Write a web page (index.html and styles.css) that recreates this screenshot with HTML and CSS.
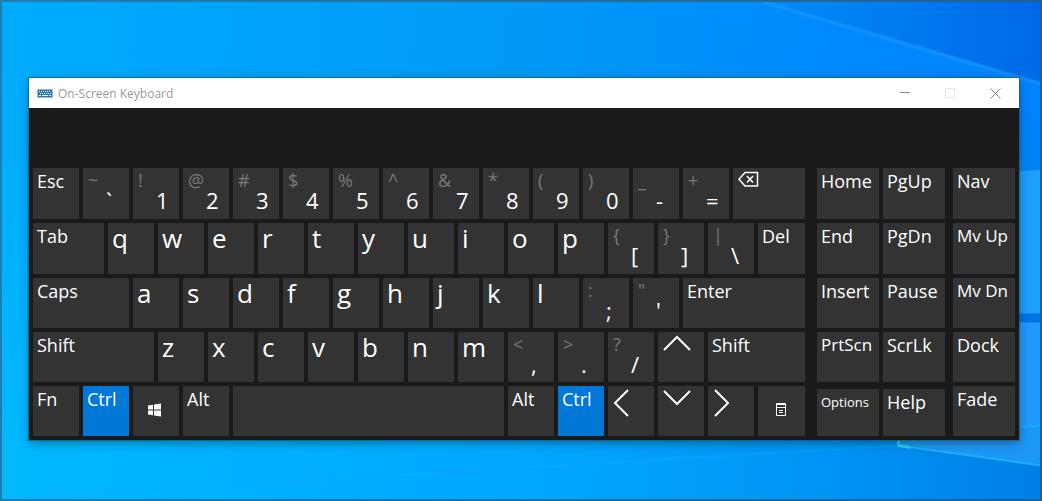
FILE: index.html
```html
<!DOCTYPE html>
<html lang="en">
<head>
    <meta charset="UTF-8">
    <meta name="viewport" content="width=device-width, initial-scale=1.0">
    <title>On-Screen Keyboard</title>
    <link rel="stylesheet" href="styles.css">
</head>
<body>
    <!-- Desktop wallpaper -->
    <svg class="wallpaper" viewBox="0 0 1042 501" preserveAspectRatio="none" aria-hidden="true">
        <defs>
            <linearGradient id="sky" x1="0" y1="0" x2="1" y2="0">
                <stop offset="0" stop-color="#00abfd"/>
                <stop offset="0.5" stop-color="#009af6"/>
                <stop offset="0.8" stop-color="#0089fc"/>
                <stop offset="1" stop-color="#0084ff"/>
            </linearGradient>
            <linearGradient id="corner" x1="0" y1="0" x2="1" y2="0">
                <stop offset="0" stop-color="#008cf6"/>
                <stop offset="0.5" stop-color="#007bf0"/>
                <stop offset="1" stop-color="#0068e6"/>
            </linearGradient>
            <linearGradient id="floor" x1="0" y1="0" x2="1" y2="0">
                <stop offset="0" stop-color="#00b9ff"/>
                <stop offset="0.5" stop-color="#00a8ff"/>
                <stop offset="0.8" stop-color="#0094f4"/>
                <stop offset="1" stop-color="#007fe6"/>
            </linearGradient>
            <linearGradient id="fade" x1="0" y1="0" x2="0" y2="1">
                <stop offset="0.1" stop-color="#fff" stop-opacity="0"/>
                <stop offset="0.9" stop-color="#fff"/>
            </linearGradient>
            <mask id="lower">
                <rect width="1042" height="501" fill="url(#fade)"/>
            </mask>
        </defs>
        <rect width="1042" height="501" fill="url(#sky)"/>
        <path d="M764 0H1042V82Z" fill="url(#corner)"/>
        <path d="M764 0L1042 82" stroke="#1b98ff" stroke-width="5" stroke-opacity="0.35"/>
        <path d="M764 0L1042 82" stroke="#1b98ff" stroke-width="2" stroke-opacity="0.6"/>
        <rect width="1042" height="501" fill="url(#floor)" mask="url(#lower)"/>
        <path d="M900 180L1042 169V314H900Z" fill="#1ea0fd"/>
        <path d="M900 314H1042V323H900Z" fill="#0074e6"/>
        <path d="M900 323H1042V427L900 447Z" fill="#2299fd"/>
        <path d="M900 441L1042 427V467L900 447Z" fill="#1c97f5"/>
        <path d="M900 441L1042 427" stroke="#16aefc" stroke-width="2"/>
        <path d="M0 501L900 447" stroke="#16aaff" stroke-width="3" stroke-opacity="0.3"/>
        <path d="M900 447L1042 467" stroke="#1fb0fa" stroke-width="2"/>
        <path d="M900 438V447L912 449" fill="none" stroke="#2fdcf0" stroke-width="3" stroke-opacity="0.8"/>
    </svg>

    <main class="window">
        <!-- Title bar -->
        <header class="titlebar">
            <svg class="app-icon" width="16" height="9" viewBox="0 0 16 9" aria-hidden="true">
                <rect x="0.5" y="0.5" width="15" height="8" fill="#1878d0" stroke="#b5b5b5"/>
                <path d="M2 2.5h12M3 4.5h11" stroke="#fff" stroke-dasharray="1 1"/>
                <path d="M2 6.5h2M5 6.5h6M12 6.5h2" stroke="#fff"/>
            </svg>
            <h1>On-Screen Keyboard</h1>
            <div class="controls">
                <button aria-label="Minimize"><svg width="11" height="11"><path d="M0 4.5h10"/></svg></button>
                <button aria-label="Maximize" disabled><svg width="11" height="11"><path d="M0.5 0.5h9v9h-9z"/></svg></button>
                <button aria-label="Close"><svg width="11" height="11"><path d="M0.5 0.5l10 10M10.5 0.5l-10 10"/></svg></button>
            </div>
        </header>

        <div class="keyboard">
            <!-- Main keys -->
            <div class="block main-keys">
                <button class="key">Esc</button>
                <button class="key dual"><span>~</span>`</button>
                <button class="key dual"><span>!</span>1</button>
                <button class="key dual"><span>@</span>2</button>
                <button class="key dual"><span>#</span>3</button>
                <button class="key dual"><span>$</span>4</button>
                <button class="key dual"><span>%</span>5</button>
                <button class="key dual"><span>^</span>6</button>
                <button class="key dual"><span>&amp;</span>7</button>
                <button class="key dual"><span>*</span>8</button>
                <button class="key dual"><span>(</span>9</button>
                <button class="key dual"><span>)</span>0</button>
                <button class="key dual"><span>_</span>-</button>
                <button class="key dual"><span>+</span>=</button>
                <button class="key icon w3" aria-label="Backspace">
                    <svg class="medium-line" width="36" height="36"><path d="M12 4.5H24.5V18H12L6 11.2ZM14 8l6 6.5M20 8l-6 6.5"/></svg>
                </button>

                <button class="key w3">Tab</button>
                <button class="key letter">q</button>
                <button class="key letter">w</button>
                <button class="key letter">e</button>
                <button class="key letter">r</button>
                <button class="key letter">t</button>
                <button class="key letter">y</button>
                <button class="key letter">u</button>
                <button class="key letter">i</button>
                <button class="key letter">o</button>
                <button class="key letter">p</button>
                <button class="key dual"><span>{</span>[</button>
                <button class="key dual"><span>}</span>]</button>
                <button class="key dual"><span>|</span>\</button>
                <button class="key">Del</button>

                <button class="key w4">Caps</button>
                <button class="key letter">a</button>
                <button class="key letter">s</button>
                <button class="key letter">d</button>
                <button class="key letter">f</button>
                <button class="key letter">g</button>
                <button class="key letter">h</button>
                <button class="key letter">j</button>
                <button class="key letter">k</button>
                <button class="key letter">l</button>
                <button class="key dual"><span>:</span>;</button>
                <button class="key dual"><span>"</span>'</button>
                <button class="key w5">Enter</button>

                <button class="key w5">Shift</button>
                <button class="key letter">z</button>
                <button class="key letter">x</button>
                <button class="key letter">c</button>
                <button class="key letter">v</button>
                <button class="key letter">b</button>
                <button class="key letter">n</button>
                <button class="key letter">m</button>
                <button class="key dual"><span>&lt;</span>,</button>
                <button class="key dual"><span>&gt;</span>.</button>
                <button class="key dual"><span>?</span>/</button>
                <button class="key icon" aria-label="Up">
                    <svg width="36" height="36"><path d="M6 18L19 5L32 18"/></svg>
                </button>
                <button class="key w4">Shift</button>

                <button class="key">Fn</button>
                <button class="key active">Ctrl</button>
                <button class="key icon center" aria-label="Windows">
                    <svg class="solid" width="16" height="16"><path d="M0 2.5L5 1.7V6.5H0ZM6 1.6L13 0.5V6.5H6ZM0 7.5H5V12.3L0 11.5ZM6 7.5H13V13.5L6 12.4Z"/></svg>
                </button>
                <button class="key">Alt</button>
                <button class="key w11" aria-label="Space"></button>
                <button class="key">Alt</button>
                <button class="key active">Ctrl</button>
                <button class="key icon" aria-label="Left">
                    <svg width="36" height="36"><path d="M20 4L7 17L20 30"/></svg>
                </button>
                <button class="key icon" aria-label="Down">
                    <svg width="36" height="36"><path d="M6 5L19 18L32 5"/></svg>
                </button>
                <button class="key icon" aria-label="Right">
                    <svg width="36" height="36"><path d="M7 4L20 17L7 30"/></svg>
                </button>
                <button class="key icon center" aria-label="Menu">
                    <svg class="thin" width="11" height="16"><path d="M0.5 0.5h9v12h-9zM0 1.5h10M0 4.5h10M3 7.5h4M3 9.5h4"/></svg>
                </button>
            </div>

            <!-- Navigation keys -->
            <div class="block nav-keys">
                <button class="key">Home</button>
                <button class="key">PgUp</button>
                <button class="key">End</button>
                <button class="key">PgDn</button>
                <button class="key">Insert</button>
                <button class="key">Pause</button>
                <button class="key medium">PrtScn</button>
                <button class="key">ScrLk</button>
                <button class="key small short">Options</button>
                <button class="key short">Help</button>
            </div>

            <!-- Window keys -->
            <div class="block side-keys">
                <button class="key">Nav</button>
                <button class="key medium">Mv Up</button>
                <button class="key medium">Mv Dn</button>
                <button class="key">Dock</button>
                <button class="key">Fade</button>
            </div>
        </div>
    </main>
</body>
</html>
```
FILE: styles.css
```css
* {
    margin: 0;
    padding: 0;
    box-sizing: border-box;
}
html {
    background: linear-gradient(to right, #1b80b0, #1f6096);
}
body {
    min-height: 100vh;
    padding: 76px 21px 59px 27px;
    border: 2px solid transparent;
    position: relative;
    overflow: hidden;
    font-family: "Segoe UI", "Open Sans", sans-serif;
}
.wallpaper {
    position: absolute;
    top: 0;
    left: 0;
    width: 100%;
    height: 100%;
    z-index: -1;
}
.window {
    background-color: #1a1a1a;
    box-shadow: 0 0 0 1px rgba(40, 80, 110, 0.6), 0 3px 10px rgba(0, 0, 0, 0.35);
}
/* ===== Title bar ===== */
.titlebar {
    display: flex;
    align-items: center;
    height: 30px;
    padding: 0 1px 0 8px;
    background-color: #fff;
}
.titlebar h1 {
    margin-left: 5px;
    font-size: 12px;
    font-weight: normal;
    color: #999;
}
.controls {
    display: flex;
    margin-left: auto;
}
.controls button {
    display: flex;
    align-items: center;
    justify-content: center;
    width: 45px;
    height: 30px;
    border: none;
    background: none;
}
.controls path {
    fill: none;
    stroke: #8a8a8a;
}
.controls button:disabled path {
    stroke: #e5e5e5;
}
/* ===== Keys ===== */
.keyboard {
    display: flex;
    padding: 60px 4px 4px;
}
.block {
    display: grid;
    grid-template-rows: 51px 51px 50px 50px 50px;
    gap: 4px;
}
.main-keys {
    flex: 772 1 0;
    grid-template-columns: repeat(30, minmax(0, 21fr)) minmax(0, 22fr);
}
.nav-keys {
    flex: 128 1 0;
    grid-template-columns: repeat(2, minmax(0, 1fr));
    margin-left: 12px;
}
.side-keys {
    flex: 62 1 0;
    margin-left: 8px;
}
.key {
    display: flex;
    align-items: flex-start;
    padding: 1px 0 0 4px;
    border: none;
    background-color: #333;
    color: #fff;
    font-family: inherit;
    font-size: 18px;
    line-height: 24px;
    white-space: nowrap;
}
.main-keys .key {
    grid-column: span 2;
}
.main-keys .w3 {
    grid-column: span 3;
}
.main-keys .w4 {
    grid-column: span 4;
}
.main-keys .w5 {
    grid-column: span 5;
}
.main-keys .w11 {
    grid-column: span 11;
}
.letter {
    font-size: 26px;
    line-height: 28px;
}
.dual {
    flex-direction: column;
    padding: 2px 0 0 23px;
    font-size: 22px;
    line-height: 20px;
}
.dual span {
    margin-left: -18px;
    font-size: 18px;
    color: #7a7a7a;
}
.medium {
    font-size: 17px;
}
.small {
    font-size: 13px;
}
.short {
    margin-top: 3px;
}
.active {
    background-color: #0078d7;
}
.icon {
    padding: 0;
}
.icon path {
    fill: none;
    stroke: #fff;
    stroke-width: 2;
}
.icon .medium-line path {
    stroke-width: 1.5;
}
.icon .thin path {
    stroke-width: 1;
}
.icon .solid path {
    fill: #fff;
    stroke: none;
}
.center {
    align-items: center;
    justify-content: center;
}
```
